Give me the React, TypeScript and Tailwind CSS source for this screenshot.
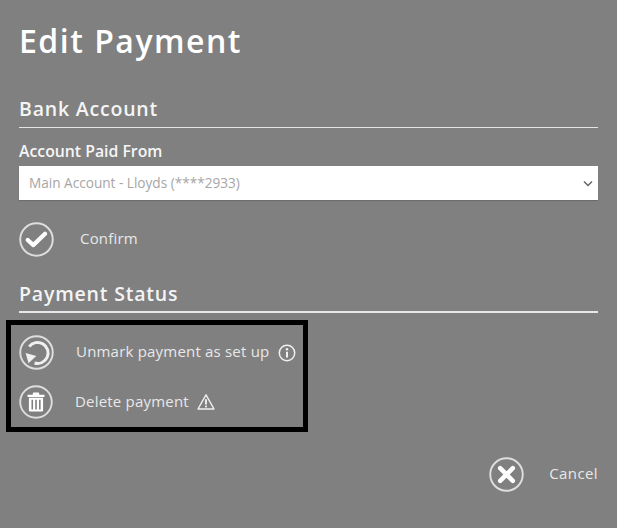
import React from "react";

const Ring = ({ children, size = 35 }: { children: React.ReactNode; size?: number }) => (
  <svg width={size} height={size} viewBox="0 0 36 36" className="shrink-0" fill="none">
    <circle cx="18" cy="18" r="16.7" stroke="#dedede" strokeWidth="2" />
    {children}
  </svg>
);

const Check = () => (
  <Ring>
    <path d="M9 18.500l5.800 5.200L26.800 12" stroke="#fff" strokeWidth="4.400" strokeLinecap="round" strokeLinejoin="round" />
  </Ring>
);

const Cross = () => (
  <Ring>
    <path d="M11.500 11.500l13 13M24.500 11.500l-13 13" stroke="#fff" strokeWidth="4.600" strokeLinecap="round" />
  </Ring>
);

const Undo = () => (
  <Ring>
    <path d="M10.500 12A10.800 10.800 0 1 1 16 28.800" stroke="#f0f0f0" strokeWidth="3" />
    <path d="M6.800 18.500l11 3-8 7.500z" fill="#f0f0f0" />
  </Ring>
);

const Trash = () => (
  <Ring size={34}>
    <path d="M9 10.200h18v2.400H9zM15 8h6l.6 2.200h-7.200z" fill="#fff" />
    <path
      fillRule="evenodd"
      d="M10.500 13.500h15v13.300a1.300 1.300 0 0 1-1.300 1.300H11.800a1.300 1.300 0 0 1-1.300-1.300zM13.200 15.500v10.500h1.700V15.500zM17.200 15.500v10.500h1.700V15.500zM21.200 15.500v10.500h1.700V15.500z"
      fill="#fff"
    />
  </Ring>
);

const Info = () => (
  <svg width="18" height="18" viewBox="0 0 18 18" fill="none" className="shrink-0">
    <circle cx="9" cy="9" r="7.700" stroke="#f0f0f0" strokeWidth="1.500" />
    <circle cx="9" cy="5.200" r="1.200" fill="#f0f0f0" />
    <path d="M9 7.800v5.700" stroke="#f0f0f0" strokeWidth="2" />
  </svg>
);

const Warn = () => (
  <svg width="18" height="18" viewBox="0 0 18 18" fill="none" className="shrink-0">
    <path d="M9 1.800L1 16h16z" stroke="#f0f0f0" strokeWidth="1.400" strokeLinejoin="round" />
    <path d="M9 6.300v5.200" stroke="#f0f0f0" strokeWidth="1.900" />
    <circle cx="9" cy="13.500" r="1.100" fill="#f0f0f0" />
  </svg>
);

export default function App() {
  return (
    <div className="flex h-[528px] w-[617px] flex-col overflow-hidden bg-[#808080] px-[19px] font-['Open_Sans',sans-serif] text-white">
      <h1 className="mt-[19px] h-[44px] text-[32px] leading-[44px] font-semibold tracking-[1.5px]">Edit Payment</h1>

      <h2 className="mt-[33px] h-[27px] text-[19.500px] leading-[25px] font-semibold tracking-[0.8px] text-[#f4f4f4]">Bank Account</h2>
      <div className="mt-[4px] h-px bg-[#e4e4e4]" />

      <label className="mt-[13px] h-[20px] text-[15.800px] leading-[20px] font-semibold text-[#f6f6f6]">Account Paid From</label>
      <div className="mt-[5px] flex h-[34px] items-center justify-between bg-white pr-[5px] pl-[10px] shadow-[0_1px_1px_rgba(0,0,0,0.15)]">
        <span className="text-[13.600px] text-[#a6a6a6]">Main Account - Lloyds (****2933)</span>
        <svg width="10" height="7" viewBox="0 0 10 7" fill="none">
          <path d="M1 1.500l4 4 4-4" stroke="#666" strokeWidth="1.500" />
        </svg>
      </div>

      <div className="mt-[22px] flex h-[35px] items-center">
        <Check />
        <span className="ml-[26px] pb-[2px] text-[15px] tracking-[0.2px] text-[#e8e8e8]">Confirm</span>
      </div>

      <h2 className="mt-[24px] h-[27px] text-[19.500px] leading-[25px] font-semibold tracking-[0.8px] text-[#f4f4f4]">Payment Status</h2>
      <div className="mt-[3px] h-[2px] bg-[#e8e8e8]" />

      <div className="mt-[7px] -ml-[13px] flex h-[112px] w-[302px] flex-col border-[5px] border-black pl-[8px]">
        <div className="mt-[10px] flex h-[35px] items-center">
          <Undo />
          <span className="ml-[22px] pb-[2px] text-[15px] tracking-[0.2px] text-[#e8e8e8]">Unmark payment as set up</span>
          <span className="ml-[9px]"><Info /></span>
        </div>
        <div className="mt-[15px] flex h-[34px] items-center">
          <Trash />
          <span className="ml-[22px] pb-[2px] text-[15px] tracking-[0.2px] text-[#e8e8e8]">Delete payment</span>
          <span className="ml-[8px]"><Warn /></span>
        </div>
      </div>

      <div className="mt-[25px] flex h-[35px] items-center justify-end">
        <Cross />
        <span className="ml-[25px] pb-[2px] text-[15px] tracking-[0.4px] text-[#e8e8e8]">Cancel</span>
      </div>
    </div>
  );
}
